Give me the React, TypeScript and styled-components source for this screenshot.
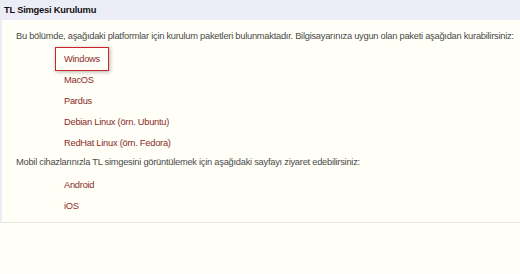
import styled, { createGlobalStyle } from "styled-components";

const Global = createGlobalStyle`
  body {
    margin: 0;
    background: #fffff7;
    font-family: "Liberation Sans", Arial, sans-serif;
    font-size: 9.3px;
    letter-spacing: -0.25px;
    color: #4a4a4a;
  }
`;

const Panel = styled.div`
  width: 520px;
  border-left: 2px solid #ececf4;
  border-bottom: 1px solid #e4e4e4;
  box-sizing: border-box;
`;

const Header = styled.div`
  height: 20px;
  display: flex;
  align-items: center;
  padding-left: 2px;
  background: #ededf8;
  color: #111;
  font-weight: bold;
  font-size: 9.3px;
  letter-spacing: -0.2px;
`;

const Body = styled.div`
  padding: 6px 0 7px 14px;
  background: #fffff7;
`;

const Para = styled.p`
  margin: 0;
  line-height: 21px;
  white-space: nowrap;
`;

const List = styled.ul`
  list-style: none;
  margin: 2px 0 -2px;
  padding: 0 0 0 48px;
`;

const Item = styled.li<{ $active?: boolean }>`
  line-height: 21px;

  a {
    color: #8a2a2a;
    text-decoration: none;
    display: inline-block;
    ${(p) =>
      p.$active &&
      `
      margin: -2px 0 -2px -9px;
      padding: 1px 8px;
      line-height: 20px;
      border: 1px solid #c8262c;
      box-shadow: 1px 1px 4px rgba(0, 0, 0, 0.3);
    `}
  }
`;

const desktop = ["Windows", "MacOS", "Pardus", "Debian Linux (örn. Ubuntu)", "RedHat Linux (örn. Fedora)"];
const mobile = ["Android", "iOS"];

export default function App() {
  return (
    <>
      <Global />
      <Panel>
        <Header>TL Simgesi Kurulumu</Header>
        <Body>
          <Para>
            Bu bölümde, aşağıdaki platformlar için kurulum paketleri bulunmaktadır. Bilgisayarınıza uygun olan
            paketi aşağıdan kurabilirsiniz:
          </Para>
          <List>
            {desktop.map((d, i) => (
              <Item key={d} $active={i === 0}>
                <a href="#">{d}</a>
              </Item>
            ))}
          </List>
          <Para>Mobil cihazlarınızla TL simgesini görüntülemek için aşağıdaki sayfayı ziyaret edebilirsiniz:</Para>
          <List>
            {mobile.map((d) => (
              <Item key={d}>
                <a href="#">{d}</a>
              </Item>
            ))}
          </List>
        </Body>
      </Panel>
    </>
  );
}
